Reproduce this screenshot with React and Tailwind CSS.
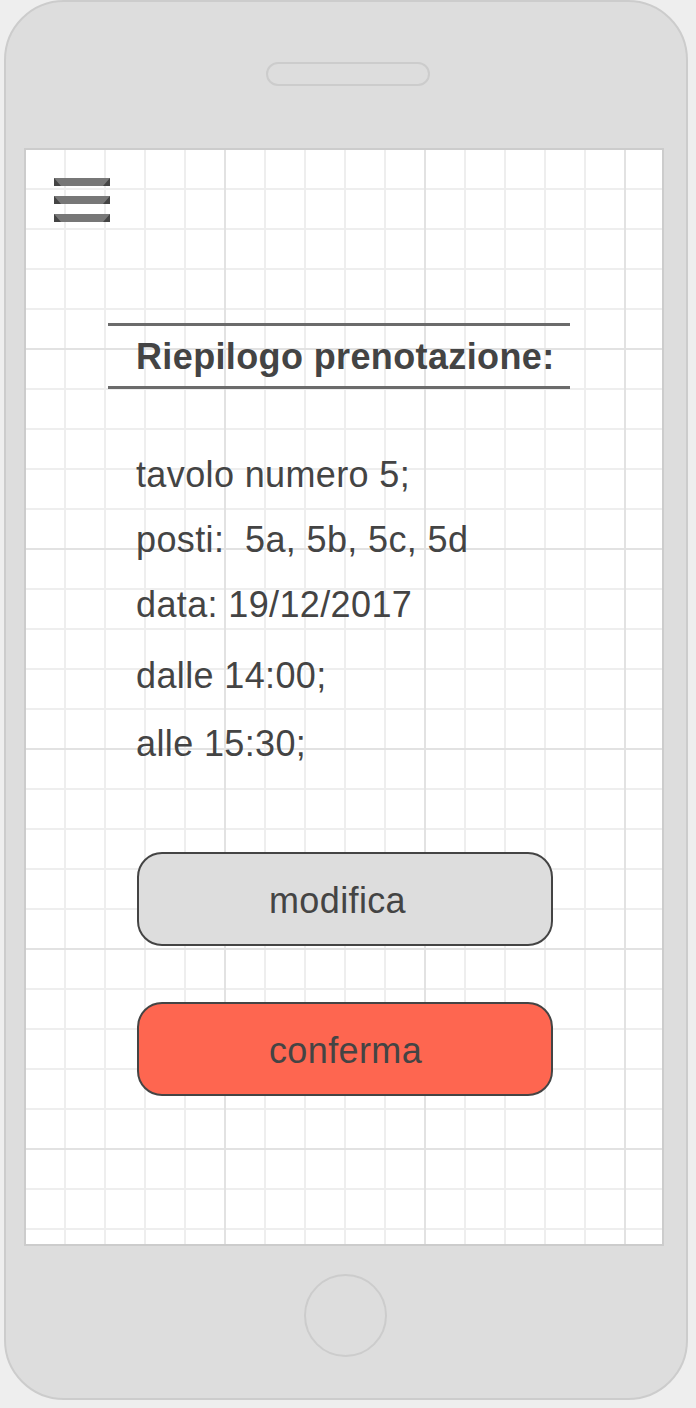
const LINES = [
  { text: 'tavolo numero 5;', gap: 'mt-[66px]' },
  { text: 'posti:  5a, 5b, 5c, 5d', gap: 'mt-[25px]' },
  { text: 'data: 19/12/2017', gap: 'mt-[25px]' },
  { text: 'dalle 14:00;', gap: 'mt-[31px]' },
  { text: 'alle 15:30;', gap: 'mt-[28px]' },
];

function Hamburger() {
  return (
    <svg width="56" height="44" viewBox="0 0 56 44" className="block">
      {[0, 18, 36].map(y => (
        <g key={y}>
          <rect x="0" y={y} width="56" height="8" fill="#444444" />
          <polygon points={`0,${y} 56,${y} 49,${y + 8} 7,${y + 8}`} fill="#777777" />
        </g>
      ))}
    </svg>
  );
}

export default function App() {
  return (
    <div className="w-full h-[1408px] bg-[#eeeeee] pl-[4px] font-['Liberation_Sans',Arial,sans-serif] text-[#444444] tracking-[0.37px]">
      <div className="w-[684px] h-[1400px] bg-[#dddddd] border-2 border-[#cccccc] rounded-[60px] flex flex-col">
        {/* speaker */}
        <div className="mt-[60px] ml-[260px] w-[164px] h-[24px] rounded-full border-2 border-[#cccccc]" />

        {/* screen */}
        <div className="mt-[62px] ml-[18px] w-[640px] h-[1098px] border-2 border-[#cccccc] bg-white [background-image:linear-gradient(to_right,#e2e2e2_2px,transparent_2px),linear-gradient(to_bottom,#e2e2e2_2px,transparent_2px),linear-gradient(to_right,#eeeeee_2px,transparent_2px),linear-gradient(to_bottom,#eeeeee_2px,transparent_2px)] [background-size:200px_200px,200px_200px,40px_40px,40px_40px] [background-position:-2px_-2px] flex flex-col">
          <div className="mt-[28px] ml-[28px]">
            <Hamburger />
          </div>

          <div className="mt-[101px] ml-[82px] w-[462px] border-y-[3px] border-[#6b6b6b] pt-[11px] pb-[9px] pl-[28px]">
            <h1 className="text-[36px] leading-[40px] font-bold">Riepilogo prenotazione:</h1>
          </div>

          <div className="ml-[110px] flex flex-col">
            {LINES.map(l => (
              <p key={l.text} className={`${l.gap} text-[36px] leading-[40px] whitespace-pre`}>{l.text}</p>
            ))}
          </div>

          <button className="mt-[88px] ml-[111px] w-[416px] h-[94px] rounded-[25px] border-2 border-[#444444] bg-[#dddddd] pt-[3px] pl-[130px] text-left text-[36px] leading-[40px] text-[#444444] self-start">
            modifica
          </button>

          <button className="mt-[56px] ml-[111px] w-[416px] h-[94px] rounded-[25px] border-2 border-[#444444] bg-[#fe6650] pt-[3px] pl-[130px] text-left text-[36px] leading-[40px] text-[#444444] self-start">
            conferma
          </button>
        </div>

        {/* home button */}
        <div className="mt-[28px] ml-[298px] w-[83px] h-[83px] rounded-full border-2 border-[#cccccc]" />
      </div>
    </div>
  );
}
